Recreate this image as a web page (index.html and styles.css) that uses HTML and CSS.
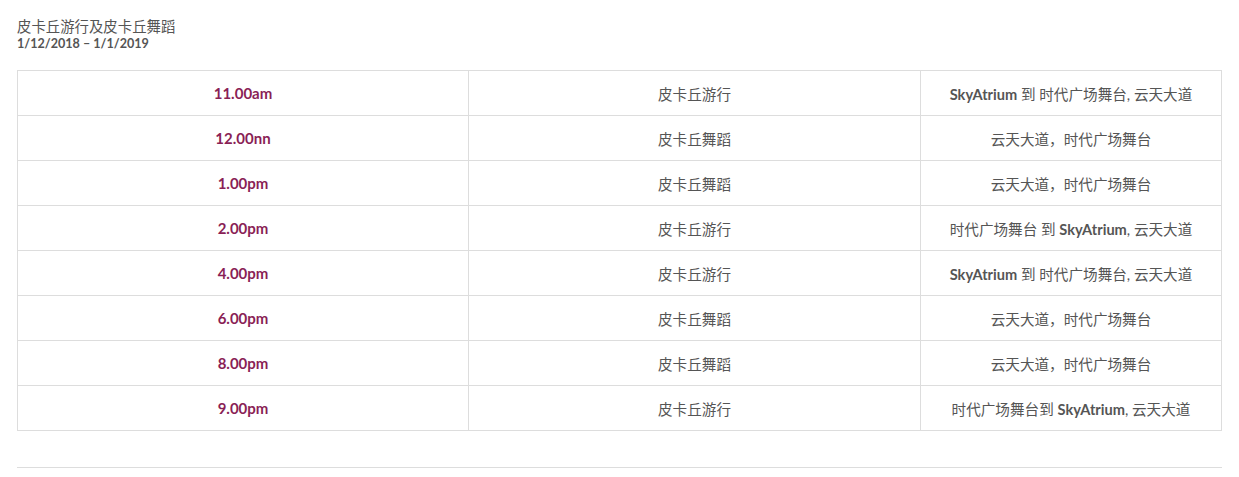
FILE: index.html
```html
<!DOCTYPE html>
<html>
<head>
<meta charset="utf-8">
<link rel="stylesheet" href="styles.css">
</head>
<body>
<div class="page">
  <div class="title">皮卡丘游行及皮卡丘舞蹈</div>
  <div class="date">1/12/2018 – 1/1/2019</div>
  <table class="sched">
    <tr><td class="time">11.00am</td><td>皮卡丘游行</td><td><b>SkyAtrium</b> 到 时代广场舞台, 云天大道</td></tr>
    <tr><td class="time">12.00nn</td><td>皮卡丘舞蹈</td><td>云天大道，时代广场舞台</td></tr>
    <tr><td class="time">1.00pm</td><td>皮卡丘舞蹈</td><td>云天大道，时代广场舞台</td></tr>
    <tr><td class="time">2.00pm</td><td>皮卡丘游行</td><td>时代广场舞台 到 <b>SkyAtrium</b>, 云天大道</td></tr>
    <tr><td class="time">4.00pm</td><td>皮卡丘游行</td><td><b>SkyAtrium</b> 到 时代广场舞台, 云天大道</td></tr>
    <tr><td class="time">6.00pm</td><td>皮卡丘舞蹈</td><td>云天大道，时代广场舞台</td></tr>
    <tr><td class="time">8.00pm</td><td>皮卡丘舞蹈</td><td>云天大道，时代广场舞台</td></tr>
    <tr><td class="time">9.00pm</td><td>皮卡丘游行</td><td>时代广场舞台到 <b>SkyAtrium</b>, 云天大道</td></tr>
  </table>
  <div class="rule"></div>
</div>
</body>
</html>
```
FILE: styles.css
```css
html, body { margin: 0; padding: 0; background: #fff; }
body {
  font-family: Lato, "Noto Sans CJK SC", sans-serif;
  color: #555;
}
.page { padding: 17px 17px 0 17px; width: 1205px; }
.title { font-size: 14.4px; line-height: 19px; color: #555; }
.date { font-size: 12.6px; line-height: 16px; font-weight: 700; color: #555; }
.sched {
  margin-top: 18px;
  width: 1205px;
  border-collapse: collapse;
  table-layout: fixed;
}
.sched td {
  border: 1px solid #ddd;
  height: 44px;
  padding: 0;
  text-align: center;
  vertical-align: middle;
  font-size: 14.6px;
  color: #555;
}
.sched td:nth-child(1) { width: 450px; }
.sched td:nth-child(2) { width: 451px; }
.sched td b { font-weight: 700; color: #555; }
.sched td.time { font-weight: 700; color: #8a1f56; font-size: 15px; }
.rule { margin-top: 36px; border-top: 1px solid #ddd; }
```
